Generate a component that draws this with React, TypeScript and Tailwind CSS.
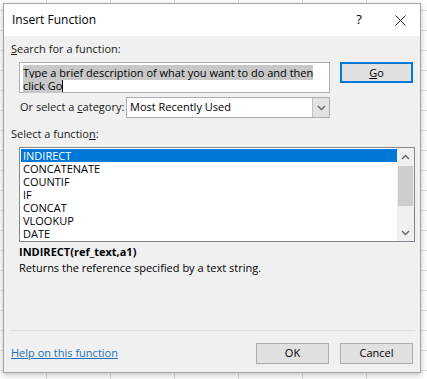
import React from 'react';

const FUNCTIONS = ['INDIRECT', 'CONCATENATE', 'COUNTIF', 'IF', 'CONCAT', 'VLOOKUP', 'DATE'];

const Chevron: React.FC<{ up?: boolean }> = ({ up }) => (
  <svg width="9" height="6" viewBox="0 0 9 6" className="block">
    <path d={up ? 'M1 5 L4.5 1.5 L8 5' : 'M1 1 L4.5 4.5 L8 1'} fill="none" stroke="#606060" strokeWidth="1.3" />
  </svg>
);

const App: React.FC = () => {
  const [selected, setSelected] = React.useState(0);

  return (
    <div className="w-[427px] h-[379px] overflow-hidden bg-white bg-[repeating-linear-gradient(90deg,transparent_0_46px,#d9d9d9_46px_47px,transparent_47px_64px)]">
      <div className="w-full h-full pt-[3px] pl-[3px] bg-[repeating-linear-gradient(180deg,transparent_0_10px,#e0e0e0_10px_11px,transparent_11px_20px)] font-['Segoe_UI','Open_Sans',sans-serif] text-[11px] text-[#1a1a1a]">
        <div className="w-[418px] h-[370px] border border-[#a3a3a3] bg-[#f0f0f0] shadow-[0_2px_6px_rgba(0,0,0,0.25)] flex flex-col">
          {/* title bar */}
          <div className="h-[32px] bg-white flex items-center pl-[8px] shrink-0">
            <span className="text-[12px] text-black">Insert Function</span>
            <span className="ml-auto w-[20px] text-center text-[13px] text-black">?</span>
            <button className="ml-[25px] mr-[14px] w-[12px] h-[12px] flex items-center justify-center">
              <svg width="11" height="11" viewBox="0 0 11 11">
                <path d="M0.5 0.5 L10.5 10.5 M10.5 0.5 L0.5 10.5" stroke="#222" strokeWidth="1" />
              </svg>
            </button>
          </div>

          {/* body */}
          <div className="flex-1 flex flex-col">
            <div className="ml-[7px] mt-[6px] h-[14px] leading-[14px]">
              <span className="underline">S</span>earch for a function:
            </div>

            <div className="flex mt-[6px]">
              <div className="ml-[15px] w-[311px] h-[31px] border border-[#abadb3] bg-white pl-[3px] pt-[3px] leading-[13px] text-black">
                <span className="bg-[#c8c8c8] box-decoration-clone">Type a brief description of what you want to do and then</span>
                <br />
                <span className="bg-[#c8c8c8]">click Go</span>
                <span className="inline-block w-px h-[12px] bg-black align-[-2px]" />
              </div>
              <button className="ml-[10px] w-[73px] h-[21px] border-2 border-[#0078d7] bg-[#e1e1e1] text-black leading-none">
                <span className="underline">G</span>o
              </button>
            </div>

            <div className="flex items-center mt-[4px] h-[21px]">
              <span className="ml-[16px] w-[106px]">
                Or select a <span className="underline">c</span>ategory:
              </span>
              <div className="w-[204px] h-[21px] border border-[#abadb3] bg-white flex items-center">
                <span className="pl-[3px] text-black">Most Recently Used</span>
                <div className="ml-auto w-[17px] h-full bg-[#e3e3e3] border-l border-[#c2c2c2] flex items-center justify-center">
                  <Chevron />
                </div>
              </div>
            </div>

            <div className="ml-[7px] mt-[9px] h-[14px] leading-[14px]">
              Select a functio<span className="underline">n</span>:
            </div>

            <div className="ml-[15px] mt-[6px] w-[396px] h-[95px] border border-[#828790] bg-white flex">
              <ul className="flex-1 pt-px pl-px">
                {FUNCTIONS.map((f, i) => (
                  <li
                    key={f}
                    onClick={() => setSelected(i)}
                    className={`h-[13px] leading-[13px] pl-[2px] ${i === selected ? 'bg-[#0078d7] text-white' : 'text-black'}`}
                  >
                    {f}
                  </li>
                ))}
              </ul>
              <div className="w-[17px] bg-[#f0f0f0] flex flex-col items-center">
                <div className="h-[17px] flex items-center justify-center"><Chevron up /></div>
                <div className="w-[15px] h-[40px] bg-[#cdcdcd] mt-[1px]" />
                <div className="mt-auto h-[17px] flex items-center justify-center"><Chevron /></div>
              </div>
            </div>

            <div className="ml-[15px] mt-[3px] h-[14px] leading-[14px] font-bold text-black">INDIRECT(ref_text,a1)</div>
            <div className="ml-[15px] mt-[2px] h-[14px] leading-[14px] text-black">Returns the reference specified by a text string.</div>

            <div className="mt-auto ml-[6px] w-[405px] h-px bg-[#dcdcdc]" />
            <div className="flex items-center mt-[12px] mb-[8px] h-[21px]">
              <a href="#" className="ml-[7px] text-[#1f6fb8] underline">Help on this function</a>
              <button className="ml-auto w-[73px] h-[21px] border border-[#adadad] bg-[#e1e1e1] text-black">OK</button>
              <button className="ml-[11px] mr-[7px] w-[73px] h-[21px] border border-[#adadad] bg-[#e1e1e1] text-black">Cancel</button>
            </div>
          </div>
        </div>
      </div>
    </div>
  );
};

export default App;
